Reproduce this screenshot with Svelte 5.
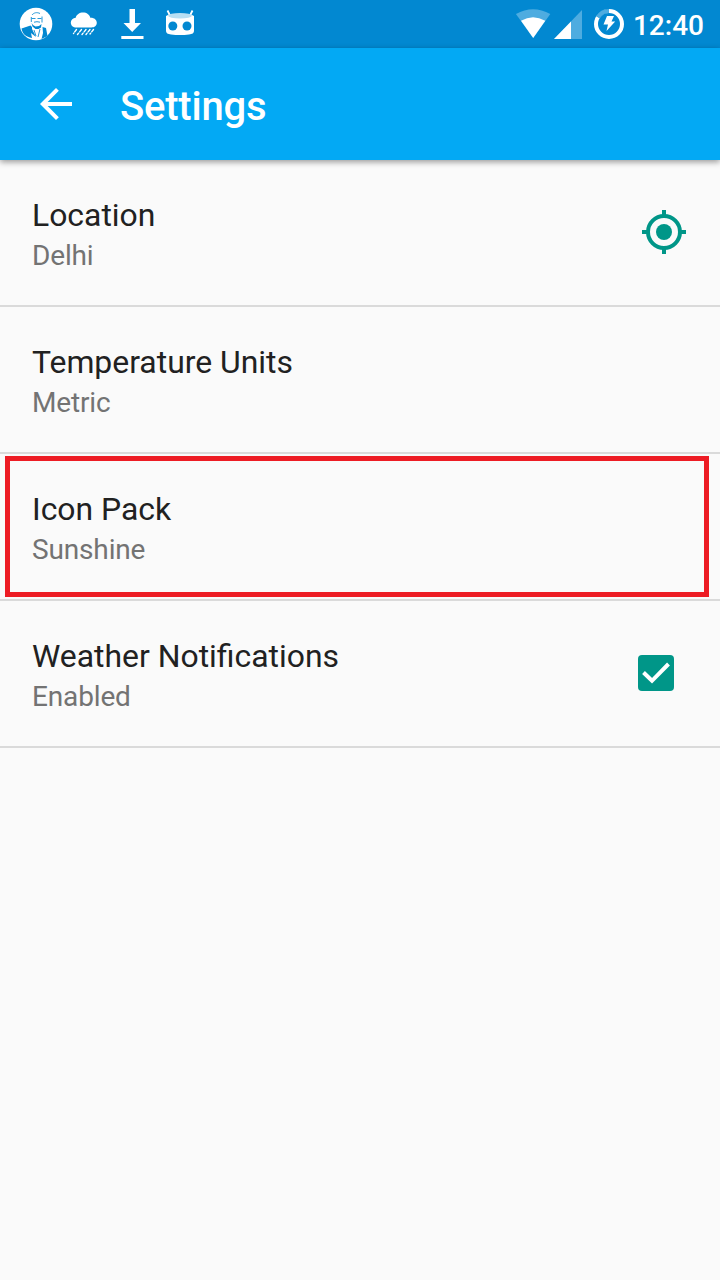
<script>
  const settings = [
    { title: 'Location', value: 'Delhi', control: 'locate' },
    { title: 'Temperature Units', value: 'Metric' },
    { title: 'Icon Pack', value: 'Sunshine', highlighted: true },
    { title: 'Weather Notifications', value: 'Enabled', control: 'checkbox' }
  ];
</script>

<div class="screen">
  <div class="status">
    <div class="group left">
      <svg width="34" height="34" viewBox="0 0 34 34">
        <circle cx="17" cy="17" r="16.300" fill="#fff" />
        <path d="M2.500 21.500l9-3 1.500 1.500 0 2 4 8-5-4 1 5C7 30 3.500 27 2.500 21.500zM23.500 20l3.500 1 1.500 8-6 3 1.500-6z" fill="#0288d1" />
        <path d="M12.500 16l1.500 2 2.500 1.500 3.500-.5 2.500-2-.5 3.500-2.500 1.500-3 0-3-2.500z" fill="#0288d1" />
        <g fill="none" stroke="#0288d1" stroke-width="1" opacity=".85">
          <path d="M13 8c2-2.500 5-3 8-1.500M12.500 11.500h4M18.500 11.500H22.500M12.300 10v5M23 9.500v6M15 15.200l3-.5 3 .5" />
          <path d="M15 23l2 6M21 22l-2 8" />
        </g>
        <path d="M15.500 17q2 1 4-.2" fill="none" stroke="#fff" stroke-width="1" />
      </svg>
      <svg class="cloud" width="28" height="26" viewBox="0 0 28 26">
        <path d="M6.500 15.500C3 15.500 .8 13.500 .8 10.500.8 7.800 3 6 5.700 5.700 6.500 2.500 9.500 .5 13 .5c3.800 0 6.500 2 7.300 5.300 3.900-.2 6.500 2 6.500 5 0 2.900-2.300 4.700-5.300 4.700z" fill="#fff" />
        <g stroke="#fff" stroke-width="1.400" stroke-linecap="round" stroke-dasharray="3 1.700">
          <path d="M6.500 17.500l-3 4M11.500 17.500l-4 5M16 17.500l-4 5M20 17.500l-4 5M23.500 17.500l-3.500 4.500" />
        </g>
      </svg>
      <svg width="24" height="32" viewBox="0 0 24 32">
        <path d="M9.500 1h5.500v14h6l-8.800 9L3.500 15h6zM1.300 28h22.200v3H1.300z" fill="#fff" />
      </svg>
      <svg width="30" height="28" viewBox="0 0 30 28">
        <path d="M2.500 1.500l2.500 5M27.500 1.500l-2.500 5" stroke="#fff" stroke-width="1.800" />
        <path d="M1 7l3-1.500h22L29 7v15q0 3-5 3.500-9 1-18 0-5-.5-5-3.500z" fill="#fff" />
        <ellipse cx="15" cy="6.800" rx="12" ry="2.800" fill="#b8dff3" />
        <circle cx="7.800" cy="17" r="4.500" fill="#0288d1" />
        <circle cx="22" cy="17" r="4.500" fill="#0288d1" />
      </svg>
    </div>
    <div class="group right">
      <svg class="wifi" width="36" height="30" viewBox="0 0 36 30">
        <path d="M.9 4.900Q18-4.500 35.300 4.900L18.200 29z" fill="#4eace0" />
        <path d="M6 11.800Q18 4.500 30.300 11.800L18.200 29z" fill="#fff" />
      </svg>
      <svg class="signal" width="28" height="29" viewBox="0 0 28 29">
        <path d="M28 0v29H0z" fill="#4eace0" />
        <path d="M17 11.500V29H0z" fill="#fff" />
      </svg>
      <svg class="battery" width="30" height="30" viewBox="0 0 30 30">
        <circle cx="15" cy="15" r="13" fill="none" stroke="#fff" stroke-width="4" />
        <path d="M3.900 8.200A13 13 0 0 1 15 2" fill="none" stroke="#0288d1" stroke-width="4.400" />
        <path d="M3.900 8.200A13 13 0 0 1 15 2" fill="none" stroke="#4eace0" stroke-width="4" />
        <path d="M13 7h7l-2.500 5.500h3.700L12.500 22l1.500-6.500H9.500z" fill="#fff" />
      </svg>
      <span class="clock">12:40</span>
    </div>
  </div>

  <header>
    <svg width="32" height="32" viewBox="0 0 32 32">
      <path d="M32 14H7.660L18.840 2.820 16 0 0 16l16 16 2.820-2.820L7.660 18H32z" fill="#fff" />
    </svg>
    <h1>Settings</h1>
  </header>

  <main>
    {#each settings as item}
      <div class="row">
        <div class="text">
          <div class="title">{item.title}</div>
          <div class="value">{item.value}</div>
        </div>
        {#if item.control === 'locate'}
          <svg class="locate" width="44" height="44" viewBox="0 0 44 44">
            <circle cx="22" cy="22" r="16" fill="none" stroke="#009688" stroke-width="4" />
            <circle cx="22" cy="22" r="8" fill="#009688" />
            <path d="M20 0h4v5h-4zM20 39h4v5h-4zM0 20h5v4H0zM39 20h5v4h-5z" fill="#009688" />
          </svg>
        {:else if item.control === 'checkbox'}
          <svg class="check" width="36" height="36" viewBox="0 0 36 36">
            <rect width="36" height="36" rx="4" fill="#009688" />
            <path d="M5.500 17.500l8.500 8.300L30.500 9" fill="none" stroke="#fff" stroke-width="4" />
          </svg>
        {/if}
        {#if item.highlighted}<div class="highlight"></div>{/if}
      </div>
    {/each}
  </main>
</div>

<style>
  .screen {
    width: 720px;
    height: 1280px;
    overflow: hidden;
    background: #fafafa;
    font-family: Roboto, sans-serif;
  }
  .status {
    display: flex;
    justify-content: space-between;
    height: 48px;
    background: #0288d1;
  }
  .group { display: flex; align-items: center; }
  .left { padding-left: 19px; gap: 22px; }
  .left svg:nth-child(1) { margin-right: -5px; }
  .left svg:nth-child(4) { margin-left: -1px; margin-bottom: 2px; }
  .cloud { margin-top: 2px; }
  .right { padding-right: 16px; }
  .signal { margin-left: 3px; }
  .battery { margin-left: 12px; }
  .clock {
    margin-left: 9px;
    color: #fff;
    font-size: 28px;
    font-weight: 500;
    line-height: 34px;
    padding-top: 4px;
  }
  header {
    position: relative;
    display: flex;
    align-items: center;
    gap: 48px;
    height: 112px;
    padding-left: 40px;
    background: #03a9f4;
    box-shadow: 0 2px 6px rgba(0, 0, 0, 0.4);
  }
  h1 {
    margin: 6px 0 0;
    color: #fff;
    font-size: 40px;
    font-weight: 500;
    line-height: 48px;
    letter-spacing: -0.2px;
  }
  .row {
    position: relative;
    display: flex;
    align-items: center;
    justify-content: space-between;
    box-sizing: border-box;
    height: 147px;
    padding: 0 32px 1px;
    border-bottom: 2px solid #dadada;
  }
  .text { padding-top: 4px; }
  .title { color: #212121; font-size: 31.900px; line-height: 42px; }
  .value { color: #737373; font-size: 28px; line-height: 39px; letter-spacing: -0.15px; }
  .locate { margin-right: 2px; }
  .check { margin-right: 14px; }
  .highlight {
    position: absolute;
    top: 2px;
    left: 5px;
    box-sizing: border-box;
    width: 704px;
    height: 141px;
    border: 5px solid #ed1c24;
  }
</style>
